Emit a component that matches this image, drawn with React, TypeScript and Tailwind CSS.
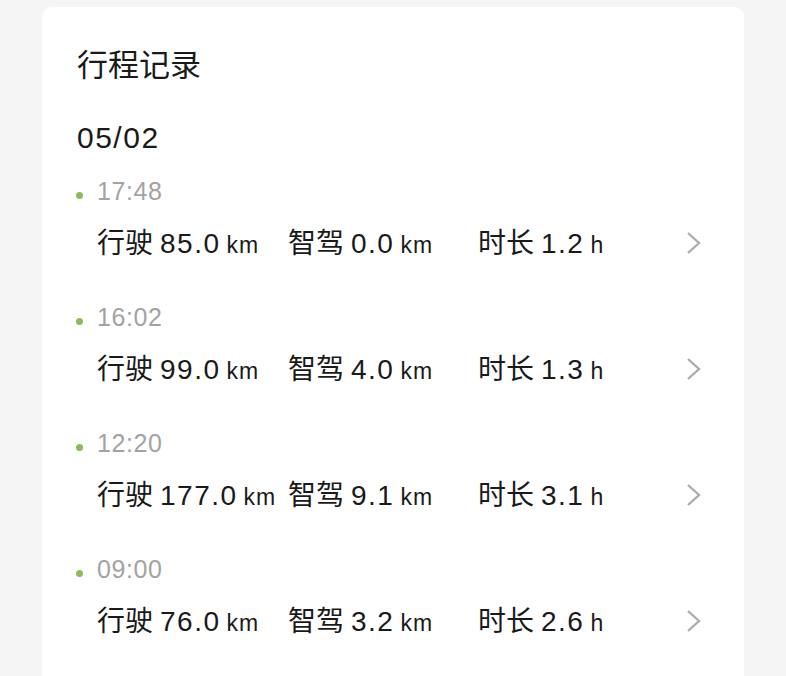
import React from 'react';

const trips = [
  { time: '17:48', drive: '85.0', smart: '0.0', hours: '1.2' },
  { time: '16:02', drive: '99.0', smart: '4.0', hours: '1.3' },
  { time: '12:20', drive: '177.0', smart: '9.1', hours: '3.1' },
  { time: '09:00', drive: '76.0', smart: '3.2', hours: '2.6' },
];

function Stat({ label, value, unit }: { label: string; value: string; unit: string }) {
  return (
    <span className="whitespace-nowrap">
      <span className="text-[28px]">{label}</span>
      <span className="text-[28px] ml-[7px] tracking-[1.5px]">{value}</span>
      <span className="text-[23px] ml-[6px] tracking-[1px]">{unit}</span>
    </span>
  );
}

export default function App() {
  return (
    <div
      className="w-[786px] h-[676px] overflow-hidden bg-[#f5f5f5] pt-[7px] px-[42px]"
      style={{ fontFamily: '"Liberation Sans", "Noto Sans CJK SC", sans-serif' }}
    >
      <div className="bg-white rounded-[10px] h-[700px] pt-[39px] pl-[35px] pr-[40px] text-[#1a1a1a]">
        {/* Header */}
        <h1 className="text-[31px] leading-[40px]">行程记录</h1>
        <div className="text-[30px] leading-[40px] mt-[32px] tracking-[1.5px]">05/02</div>

        {/* Trips */}
        <div className="mt-[17px] flex flex-col gap-[35px]">
          {trips.map((t) => (
            <div key={t.time}>
              <div className="flex items-center h-[32px]">
                <span className="w-[7px] h-[7px] rounded-full bg-[#8bbd56] mt-[8px] -ml-[1px]" />
                <span className="ml-[14px] text-[25px] leading-[32px] text-[#a3a3a3] tracking-[0.6px]">{t.time}</span>
              </div>
              <div className="mt-[19px] flex items-center h-[40px] pl-[20px] leading-[40px]">
                <div className="w-[191px]">
                  <Stat label="行驶" value={t.drive} unit="km" />
                </div>
                <div className="w-[190px]">
                  <Stat label="智驾" value={t.smart} unit="km" />
                </div>
                <div>
                  <Stat label="时长" value={t.hours} unit="h" />
                </div>
                <svg
                  className="ml-auto mr-[2px] -mt-[6px]"
                  width="17"
                  height="24"
                  viewBox="0 0 17 24"
                  fill="none"
                  stroke="#ababab"
                  strokeWidth="2.3"
                >
                  <path d="M3 2l11 10-11 10" />
                </svg>
              </div>
            </div>
          ))}
        </div>
      </div>
    </div>
  );
}
